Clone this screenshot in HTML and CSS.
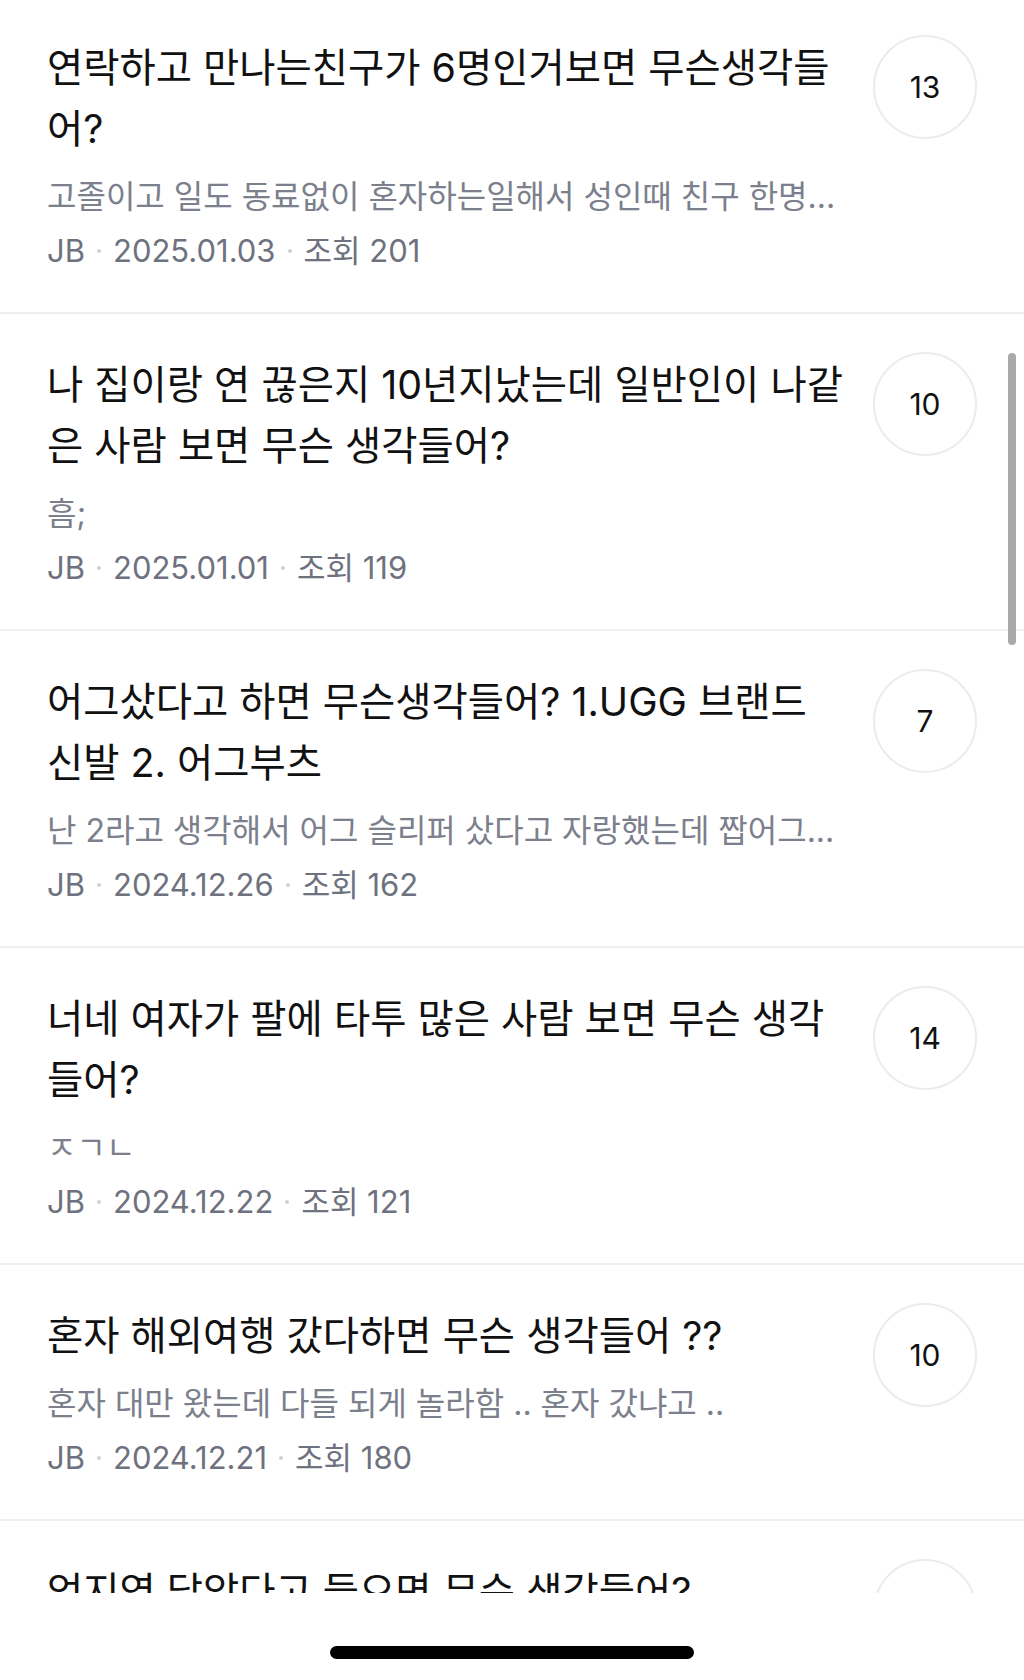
FILE: index.html
```html
<!DOCTYPE html>
<html lang="ko">
<head>
<meta charset="utf-8">
<title>목록</title>
<link rel="stylesheet" href="styles.css">
</head>
<body>
<div class="screen">
  <div class="list">
    <div class="item">
      <div class="text">
        <div class="title">연락하고 만나는친구가 6명인거보면 무슨생각들어?</div>
        <div class="excerpt">고졸이고 일도 동료없이 혼자하는일해서 성인때 친구 한명...</div>
        <div class="meta"><span>JB</span><i class="dot"></i><span>2025.01.03</span><i class="dot"></i><span>조회 201</span></div>
      </div>
      <div class="count">13</div>
    </div>
    <div class="item">
      <div class="text">
        <div class="title">나 집이랑 연 끊은지 10년지났는데 일반인이 나같은 사람 보면 무슨 생각들어?</div>
        <div class="excerpt">흠;</div>
        <div class="meta"><span>JB</span><i class="dot"></i><span>2025.01.01</span><i class="dot"></i><span>조회 119</span></div>
      </div>
      <div class="count">10</div>
    </div>
    <div class="item">
      <div class="text">
        <div class="title">어그샀다고 하면 무슨생각들어? 1.UGG 브랜드 신발 2. 어그부츠</div>
        <div class="excerpt">난 2라고 생각해서 어그 슬리퍼 샀다고 자랑했는데 짭어그...</div>
        <div class="meta"><span>JB</span><i class="dot"></i><span>2024.12.26</span><i class="dot"></i><span>조회 162</span></div>
      </div>
      <div class="count">7</div>
    </div>
    <div class="item">
      <div class="text">
        <div class="title">너네 여자가 팔에 타투 많은 사람 보면 무슨 생각들어?</div>
        <div class="excerpt">ㅈㄱㄴ</div>
        <div class="meta"><span>JB</span><i class="dot"></i><span>2024.12.22</span><i class="dot"></i><span>조회 121</span></div>
      </div>
      <div class="count">14</div>
    </div>
    <div class="item">
      <div class="text">
        <div class="title">혼자 해외여행 갔다하면 무슨 생각들어 ??</div>
        <div class="excerpt">혼자 대만 왔는데 다들 되게 놀라함 .. 혼자 갔냐고 ..</div>
        <div class="meta"><span>JB</span><i class="dot"></i><span>2024.12.21</span><i class="dot"></i><span>조회 180</span></div>
      </div>
      <div class="count">10</div>
    </div>
    <div class="item">
      <div class="text">
        <div class="title">엄지영 닮았다고 들으면 무슨 생각들어?</div>
        <div class="excerpt">ㅋㅋ</div>
        <div class="meta"><span>JB</span><i class="dot"></i><span>2024.12.20</span><i class="dot"></i><span>조회 150</span></div>
      </div>
      <div class="count">9</div>
    </div>
  </div>
  <div class="scrollbar"></div>
  <div class="home-area"><div class="home-bar"></div></div>
</div>
</body>
</html>
```
FILE: styles.css
```css
* { box-sizing: border-box; }
html, body { margin: 0; padding: 0; background: #fff; }
body {
  font-family: "Inter", "Noto Sans CJK KR", "Noto Sans", sans-serif;
  color: #111;
}
.screen {
  position: relative;
  width: 1024px;
  height: 1680px;
  overflow: hidden;
  background: #fff;
}
.list {
  height: 1593px;
  overflow: hidden;
}
.item {
  display: flex;
  align-items: flex-start;
  gap: 29px;
  padding: 41px 47px 39px 47px;
  border-bottom: 2px solid #efefef;
}
.item:first-child {
  margin-top: -3px;
}
.text {
  flex: 1;
  min-width: 0;
}
.title {
  font-size: 39.4px;
  line-height: 61px;
  color: #111;
  letter-spacing: 0;
}
.excerpt {
  margin-top: 15px;
  font-size: 32px;
  line-height: 44px;
  color: #7b808c;
  white-space: nowrap;
  overflow: hidden;
  text-overflow: ellipsis;
}
.meta {
  margin-top: 10px;
  font-size: 31px;
  line-height: 44px;
  color: #6d727e;
  display: flex;
  align-items: center;
}
.dot {
  display: inline-block;
  width: 4px;
  height: 4px;
  border-radius: 50%;
  background: #cfd1d5;
  margin: 0 12px;
}
.count {
  flex: none;
  width: 104px;
  height: 104px;
  margin-top: -3px;
  border: 2px solid #ececec;
  border-radius: 50%;
  display: flex;
  align-items: center;
  justify-content: center;
  font-size: 30px;
  color: #111;
}
.scrollbar {
  position: absolute;
  left: 1008px;
  top: 353px;
  width: 8px;
  height: 292px;
  border-radius: 4px;
  background: #a9a9a9;
}
.home-area {
  height: 87px;
  display: flex;
  justify-content: center;
  padding-top: 53px;
}
.home-bar {
  width: 364px;
  height: 13px;
  border-radius: 7px;
  background: #000;
}
```
